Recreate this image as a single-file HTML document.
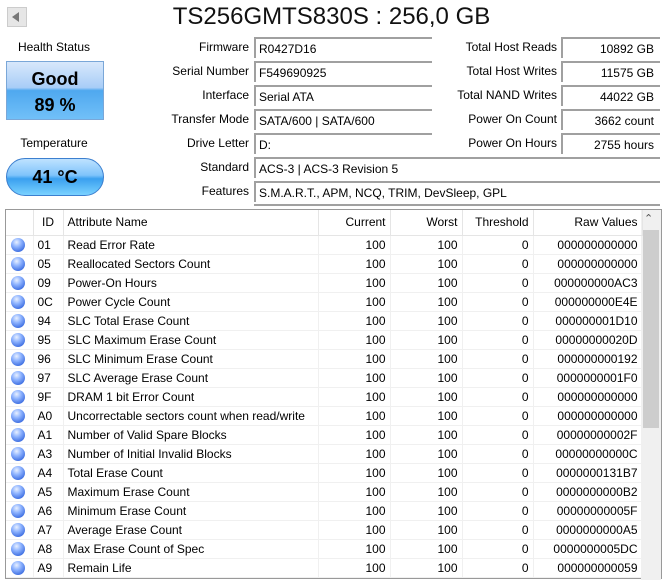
<!DOCTYPE html>
<html><head><meta charset="utf-8"><style>
*{margin:0;padding:0;box-sizing:border-box}
body{width:663px;height:575px;background:#fff;font-family:"Liberation Sans",sans-serif;font-size:12px;color:#000;position:relative;overflow:hidden}
.a{position:absolute;white-space:nowrap}
.lbl{text-align:right;width:160px}
.box{position:absolute;height:21px;border-top:2px solid #a0a0a0;border-left:2px solid #a0a0a0;padding:3px 0 0 3px;font-size:12px}
.rb{text-align:right;padding-right:6px}
table{border-collapse:collapse;position:absolute;left:6px;top:210px;width:636px;table-layout:fixed}
td{height:19px;padding:0 4px;font-size:12px;white-space:nowrap;overflow:hidden;border-right:1px solid #f0f0f0;border-bottom:1px solid #f0f0f0}
th{height:25px;font-weight:normal;font-size:12px;padding:0 4px;border-right:1px solid #e5e5e5;border-bottom:1px solid #e5e5e5}
.r{text-align:right}
.dot{width:14px;height:14px;border-radius:50%;background:radial-gradient(circle at 40% 30%,#e8f0ff 0,#8fb4ff 35%,#3a6be0 80%,#2850c0 100%);margin-left:1px}
</style></head><body>
<div class="a" style="left:7px;top:7px;width:20px;height:20px;background:#e6e6e6;border:1px solid #ccc"></div>
<div class="a" style="left:12px;top:12px;width:0;height:0;border-top:5px solid transparent;border-bottom:5px solid transparent;border-right:7px solid #777"></div>
<div class="a" style="left:0;width:663px;top:3px;text-align:center;font-size:24px;color:#111">TS256GMTS830S : 256,0 GB</div>

<div class="a" style="left:5px;width:98px;top:40px;text-align:center">Health Status</div>
<div class="a" style="left:6px;top:61px;width:98px;height:59px;border:1px solid #7aa7d8;background:linear-gradient(#d8e8fb 0,#a8cdf7 45%,#4fa8ef 50%,#71c0f8 100%);text-align:center;font-weight:bold;font-size:18px;line-height:26px;padding-top:4px">Good<br>89 %</div>
<div class="a" style="left:5px;width:98px;top:136px;text-align:center">Temperature</div>
<div class="a" style="left:6px;top:158px;width:98px;height:38px;border-radius:19px;border:1px solid #3c7fcf;background:linear-gradient(#bfe2ff 0,#7fc4fb 45%,#3aa0ef 55%,#7ad2ff 100%);text-align:center;font-weight:bold;font-size:18px;line-height:36px">41 °C</div>

<div class="a lbl" style="left:89px;top:40px">Firmware</div>
<div class="a lbl" style="left:89px;top:64px">Serial Number</div>
<div class="a lbl" style="left:89px;top:88px">Interface</div>
<div class="a lbl" style="left:89px;top:112px">Transfer Mode</div>
<div class="a lbl" style="left:89px;top:136px">Drive Letter</div>
<div class="a lbl" style="left:89px;top:160px">Standard</div>
<div class="a lbl" style="left:89px;top:184px">Features</div>
<div class="box" style="left:254px;top:37px;width:178px">R0427D16</div>
<div class="box" style="left:254px;top:61px;width:178px">F549690925</div>
<div class="box" style="left:254px;top:85px;width:178px">Serial ATA</div>
<div class="box" style="left:254px;top:109px;width:178px">SATA/600 | SATA/600</div>
<div class="box" style="left:254px;top:133px;width:178px">D:</div>
<div class="box" style="left:254px;top:157px;width:406px">ACS-3 | ACS-3 Revision 5</div>
<div class="box" style="left:254px;top:181px;width:406px">S.M.A.R.T., APM, NCQ, TRIM, DevSleep, GPL</div>
<div class="a" style="left:254px;top:204px;width:406px;border-top:2px solid #a0a0a0"></div>

<div class="a lbl" style="left:397px;top:40px">Total Host Reads</div>
<div class="a lbl" style="left:397px;top:64px">Total Host Writes</div>
<div class="a lbl" style="left:397px;top:88px">Total NAND Writes</div>
<div class="a lbl" style="left:397px;top:112px">Power On Count</div>
<div class="a lbl" style="left:397px;top:136px">Power On Hours</div>
<div class="box rb" style="left:561px;top:37px;width:99px">10892 GB</div>
<div class="box rb" style="left:561px;top:61px;width:99px">11575 GB</div>
<div class="box rb" style="left:561px;top:85px;width:99px">44022 GB</div>
<div class="box rb" style="left:561px;top:109px;width:99px">3662 count</div>
<div class="box rb" style="left:561px;top:133px;width:99px">2755 hours</div>

<div class="a" style="left:5px;top:209px;width:657px;height:370px;border:1px solid #999"></div>
<div class="a" style="left:641px;top:210px;width:20px;height:370px;background:#f0f0f0"></div>
<div class="a" style="left:644px;top:212px;font-size:11px;color:#555">&#8963;</div>
<div class="a" style="left:642px;top:230px;width:17px;height:198px;background:#cdcdcd"></div>
<table>
<colgroup><col style="width:27px"><col style="width:30px"><col style="width:255px"><col style="width:72px"><col style="width:72px"><col style="width:71px"><col style="width:109px"></colgroup>
<tr><th></th><th>ID</th><th style="text-align:left">Attribute Name</th><th class="r">Current</th><th class="r">Worst</th><th class="r">Threshold</th><th class="r">Raw Values</th></tr>
<tr><td><div class="dot"></div></td><td>01</td><td>Read Error Rate</td><td class="r">100</td><td class="r">100</td><td class="r">0</td><td class="r">000000000000</td></tr>
<tr><td><div class="dot"></div></td><td>05</td><td>Reallocated Sectors Count</td><td class="r">100</td><td class="r">100</td><td class="r">0</td><td class="r">000000000000</td></tr>
<tr><td><div class="dot"></div></td><td>09</td><td>Power-On Hours</td><td class="r">100</td><td class="r">100</td><td class="r">0</td><td class="r">000000000AC3</td></tr>
<tr><td><div class="dot"></div></td><td>0C</td><td>Power Cycle Count</td><td class="r">100</td><td class="r">100</td><td class="r">0</td><td class="r">000000000E4E</td></tr>
<tr><td><div class="dot"></div></td><td>94</td><td>SLC Total Erase Count</td><td class="r">100</td><td class="r">100</td><td class="r">0</td><td class="r">000000001D10</td></tr>
<tr><td><div class="dot"></div></td><td>95</td><td>SLC Maximum Erase Count</td><td class="r">100</td><td class="r">100</td><td class="r">0</td><td class="r">00000000020D</td></tr>
<tr><td><div class="dot"></div></td><td>96</td><td>SLC Minimum Erase Count</td><td class="r">100</td><td class="r">100</td><td class="r">0</td><td class="r">000000000192</td></tr>
<tr><td><div class="dot"></div></td><td>97</td><td>SLC Average Erase Count</td><td class="r">100</td><td class="r">100</td><td class="r">0</td><td class="r">0000000001F0</td></tr>
<tr><td><div class="dot"></div></td><td>9F</td><td>DRAM 1 bit Error Count</td><td class="r">100</td><td class="r">100</td><td class="r">0</td><td class="r">000000000000</td></tr>
<tr><td><div class="dot"></div></td><td>A0</td><td>Uncorrectable sectors count when read/write</td><td class="r">100</td><td class="r">100</td><td class="r">0</td><td class="r">000000000000</td></tr>
<tr><td><div class="dot"></div></td><td>A1</td><td>Number of Valid Spare Blocks</td><td class="r">100</td><td class="r">100</td><td class="r">0</td><td class="r">00000000002F</td></tr>
<tr><td><div class="dot"></div></td><td>A3</td><td>Number of Initial Invalid Blocks</td><td class="r">100</td><td class="r">100</td><td class="r">0</td><td class="r">00000000000C</td></tr>
<tr><td><div class="dot"></div></td><td>A4</td><td>Total Erase Count</td><td class="r">100</td><td class="r">100</td><td class="r">0</td><td class="r">0000000131B7</td></tr>
<tr><td><div class="dot"></div></td><td>A5</td><td>Maximum Erase Count</td><td class="r">100</td><td class="r">100</td><td class="r">0</td><td class="r">0000000000B2</td></tr>
<tr><td><div class="dot"></div></td><td>A6</td><td>Minimum Erase Count</td><td class="r">100</td><td class="r">100</td><td class="r">0</td><td class="r">00000000005F</td></tr>
<tr><td><div class="dot"></div></td><td>A7</td><td>Average Erase Count</td><td class="r">100</td><td class="r">100</td><td class="r">0</td><td class="r">0000000000A5</td></tr>
<tr><td><div class="dot"></div></td><td>A8</td><td>Max Erase Count of Spec</td><td class="r">100</td><td class="r">100</td><td class="r">0</td><td class="r">0000000005DC</td></tr>
<tr><td><div class="dot"></div></td><td>A9</td><td>Remain Life</td><td class="r">100</td><td class="r">100</td><td class="r">0</td><td class="r">000000000059</td></tr>
</table>
</body></html>
